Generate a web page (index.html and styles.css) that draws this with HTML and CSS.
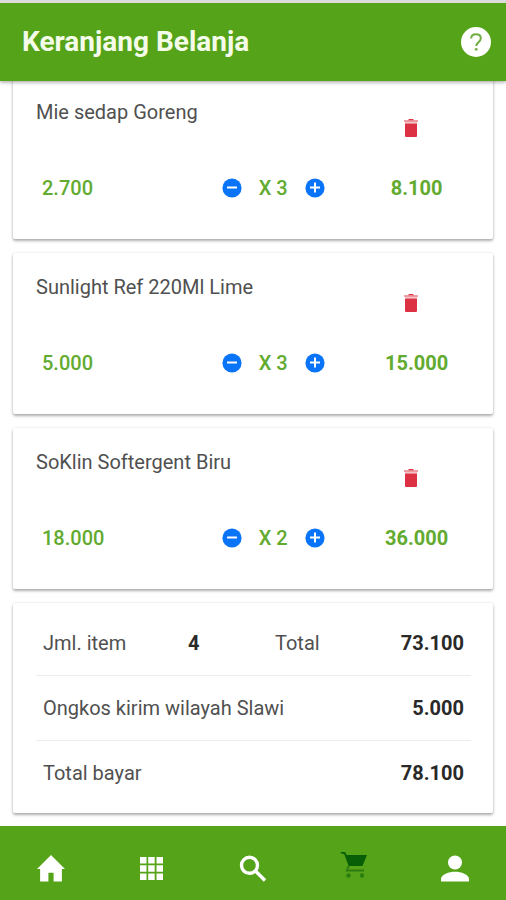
FILE: index.html
```html
<!DOCTYPE html>
<html lang="id">
<head>
<meta charset="utf-8">
<meta name="viewport" content="width=device-width, initial-scale=1">
<title>Keranjang Belanja</title>
<link rel="stylesheet" href="styles.css">
</head>
<body>
<svg class="sprite" aria-hidden="true">
  <symbol id="minus" viewBox="0 0 20 20"><circle cx="10" cy="10" r="9.6" fill="#0a74f8"/><path d="M5 9.5h10" stroke="#fff" stroke-width="2"/></symbol>
  <symbol id="plus" viewBox="0 0 20 20"><circle cx="10" cy="10" r="9.6" fill="#0a74f8"/><path d="M5 9.5h10M10 4.5v10" stroke="#fff" stroke-width="2"/></symbol>
  <symbol id="trash" viewBox="0 0 14 18"><path d="M5 0h4l1 1.200H4z" fill="#dc3545"/><path d="M0 1.200h14v1.600H0z" fill="#dc3545" fill-opacity=".6"/><path d="M1 2.800h12v1.700H1z" fill="#dc3545" fill-opacity=".3"/><path d="M1 4.500h12V17q0 1-1 1H2q-1 0-1-1z" fill="#dc3043"/></symbol>
</svg>
<header class="topbar">
  <h1 class="title">Keranjang Belanja</h1>
  <button class="icon-button" type="button" aria-label="Bantuan">
    <svg class="help-icon" viewBox="0 0 30 30"><circle cx="15" cy="15" r="15" fill="#fff"/><path d="M10.200 11.500c0-2.700 2-4.300 4.800-4.300s4.800 1.600 4.800 4.100c0 3.700-4.600 4-4.600 7.700" fill="none" stroke="#70ad42" stroke-width="2"/><circle cx="15.200" cy="22.300" r="1.400" fill="#70ad42"/></svg>
  </button>
</header>
<main class="content">
  <article class="card item">
    <h2 class="name">Mie sedap Goreng</h2>
    <button class="icon-button remove" type="button" aria-label="Hapus"><svg class="trash-icon"><use href="#trash"/></svg></button>
    <span class="price">2.700</span>
    <div class="quantity">
      <button class="icon-button" type="button" aria-label="Kurangi"><svg class="step-icon"><use href="#minus"/></svg></button>
      <span>X 3</span>
      <button class="icon-button" type="button" aria-label="Tambah"><svg class="step-icon"><use href="#plus"/></svg></button>
    </div>
    <strong class="subtotal">8.100</strong>
  </article>
  <article class="card item">
    <h2 class="name">Sunlight Ref 220Ml Lime</h2>
    <button class="icon-button remove" type="button" aria-label="Hapus"><svg class="trash-icon"><use href="#trash"/></svg></button>
    <span class="price">5.000</span>
    <div class="quantity">
      <button class="icon-button" type="button" aria-label="Kurangi"><svg class="step-icon"><use href="#minus"/></svg></button>
      <span>X 3</span>
      <button class="icon-button" type="button" aria-label="Tambah"><svg class="step-icon"><use href="#plus"/></svg></button>
    </div>
    <strong class="subtotal">15.000</strong>
  </article>
  <article class="card item">
    <h2 class="name">SoKlin Softergent Biru</h2>
    <button class="icon-button remove" type="button" aria-label="Hapus"><svg class="trash-icon"><use href="#trash"/></svg></button>
    <span class="price">18.000</span>
    <div class="quantity">
      <button class="icon-button" type="button" aria-label="Kurangi"><svg class="step-icon"><use href="#minus"/></svg></button>
      <span>X 2</span>
      <button class="icon-button" type="button" aria-label="Tambah"><svg class="step-icon"><use href="#plus"/></svg></button>
    </div>
    <strong class="subtotal">36.000</strong>
  </article>
  <section class="card summary">
    <div class="row counts"><span>Jml. item</span><strong>4</strong><span>Total</span><strong class="amount">73.100</strong></div>
    <div class="row"><span>Ongkos kirim wilayah Slawi</span><strong class="amount">5.000</strong></div>
    <div class="row"><span>Total bayar</span><strong class="amount">78.100</strong></div>
  </section>
</main>
<nav class="tabs">
  <a class="tab" href="#home" aria-label="Beranda"><svg class="tab-icon" viewBox="0 0 27 26"><path d="M13.500 0L27 13.500h-3V25.500h-8V17h-5v8.500H3V13.500H0z"/></svg></a>
  <a class="tab" href="#categories" aria-label="Kategori"><svg class="tab-icon grid-icon" viewBox="0 0 23 23"><path d="M0 0h6.500v6.500H0zM8.200 0h6.500v6.500H8.200zM16.500 0H23v6.500h-6.500zM0 8.200h6.500v6.500H0zM8.200 8.200h6.500v6.500H8.200zM16.500 8.200H23v6.500h-6.500zM0 16.500h6.500V23H0zM8.200 16.500h6.500V23H8.200zM16.500 16.500H23V23h-6.500z"/></svg></a>
  <a class="tab" href="#search" aria-label="Cari"><svg class="tab-icon" viewBox="0 0 28 27"><g fill="none" stroke="currentColor" stroke-width="3.400"><circle cx="10.500" cy="10.300" r="8"/><path d="M16.500 16l9.500 9.500"/></g></svg></a>
  <a class="tab active" href="#cart" aria-label="Keranjang" aria-current="page"><svg class="tab-icon" viewBox="0 0 28 27"><path d="M1 1.200h4l4 12-2.200 5.300H24" fill="none" stroke="#2c7d10" stroke-width="1.800"/><path d="M0 0h4.500l2 3H27l-4.500 11H9L4.500 2.600z" fill="#075e06"/><circle cx="8.500" cy="23.500" r="2.200" fill="#2c7d10"/><circle cx="22" cy="23.500" r="2.200" fill="#2c7d10"/></svg></a>
  <a class="tab" href="#account" aria-label="Akun"><svg class="tab-icon" viewBox="0 0 28 26"><circle cx="14" cy="7" r="7"/><path d="M0 26v-2.500C0 19 8 16.300 14 16.300s14 2.700 14 7.200V26z"/></svg></a>
</nav>
</body>
</html>
```
FILE: styles.css
```css
* {
  box-sizing: border-box;
}

body {
  display: flex;
  flex-direction: column;
  min-height: 100vh;
  margin: 0;
  background: #fff;
  color: #505050;
  font: 20px/24px Roboto, sans-serif;
}

.sprite {
  position: absolute;
  width: 0;
  height: 0;
}

svg {
  display: block;
}

.topbar {
  position: sticky;
  top: 0;
  z-index: 1;
  display: flex;
  align-items: center;
  justify-content: space-between;
  padding: 22px 15px 22px 22px;
  border-top: 3px solid #dcdcdc;
  background: #54a318;
  box-shadow: 0 1px 4px rgba(0, 0, 0, 0.4);
}

.title {
  margin: 0;
  color: #f4fbe9;
  font-size: 28px;
  font-weight: 700;
  line-height: 34px;
}

.icon-button {
  padding: 0;
  border: 0;
  background: none;
  cursor: pointer;
}

.help-icon {
  width: 30px;
  height: 30px;
}

.content {
  display: flex;
  flex: 1;
  flex-direction: column;
  gap: 14px;
  margin-top: -3px;
  padding: 0 13px 12px;
}

.card {
  padding: 22px 22px 22px 23px;
  border-radius: 2px;
  background: #fff;
  box-shadow: 0 2px 3px rgba(0, 0, 0, 0.3), 0 0 3px rgba(0, 0, 0, 0.1);
}

.item {
  display: grid;
  grid-template-columns: 4fr 5fr 3fr;
  grid-template-rows: 56px 64px;
  align-items: center;
  justify-items: center;
  padding-bottom: 19px;
}

.name {
  grid-column: span 2;
  align-self: start;
  justify-self: start;
  margin: 0;
  font-size: 20px;
  font-weight: 400;
}

.remove {
  padding-right: 12px;
}

.trash-icon {
  width: 14px;
  height: 18px;
}

.price,
.quantity,
.subtotal {
  color: #62ab30;
}

.price,
.quantity {
  font-weight: 500;
}

.price {
  justify-self: start;
  padding-left: 6px;
}

.quantity {
  display: flex;
  align-items: center;
  gap: 17px;
  padding-left: 3px;
}

.step-icon {
  width: 20px;
  height: 20px;
}

.summary {
  padding-top: 8px;
  padding-bottom: 8px;
}

.row {
  display: flex;
  align-items: center;
  justify-content: space-between;
  padding: 20px 7px;
}

.row + .row {
  border-top: 1px solid #ececec;
}

.counts {
  display: grid;
  grid-template-columns: 145px 87px 1fr auto;
}

.row strong {
  color: #292929;
}

.tabs {
  position: sticky;
  bottom: 0;
  display: grid;
  grid-template-columns: repeat(5, 1fr);
  padding: 24px 0 14px;
  background: #54a318;
}

.tab {
  display: flex;
  align-items: center;
  justify-content: center;
  height: 36px;
  color: #fff;
}

.active {
  padding-bottom: 6px;
}

.tab-icon {
  width: 28px;
  height: 27px;
  fill: currentColor;
}

.grid-icon {
  width: 23px;
  height: 23px;
}
```
